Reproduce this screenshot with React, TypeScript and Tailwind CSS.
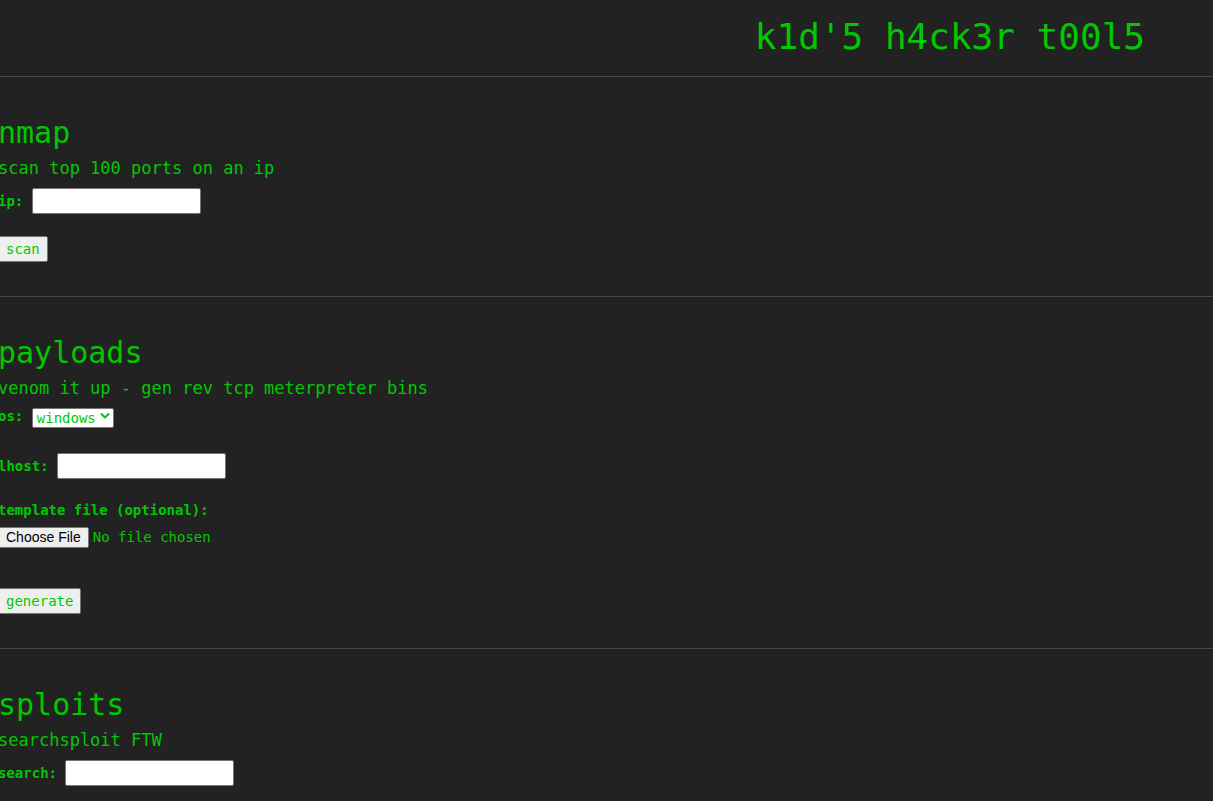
import React from "react";

const mono = "font-['DejaVu_Sans_Mono',monospace]";

function Row({ label, children, className = "" }: { label: string; children: React.ReactNode; className?: string }) {
  return (
    <div className={`flex items-center ${className}`}>
      <label className="text-[14px] font-bold leading-[17px]">{label}</label>
      {children}
    </div>
  );
}

function TextInput({ w }: { w: string }) {
  return (
    <input
      type="text"
      className={`${w} h-[26px] bg-white border border-[#767676] rounded-[2px] px-[2px] text-[14px] text-black outline-none`}
    />
  );
}

function Btn({ children }: { children: React.ReactNode }) {
  return (
    <button className="h-[26px] self-start px-[7px] bg-[#efefef] border border-[#767676] rounded-[2px] text-[14px] leading-none text-[#00c800]">
      {children}
    </button>
  );
}

function Heading({ children }: { children: React.ReactNode }) {
  return <h2 className="text-[30px] leading-[36px] font-normal">{children}</h2>;
}

function Desc({ children }: { children: React.ReactNode }) {
  return <p className="mt-[7px] text-[17px] leading-[20px]">{children}</p>;
}

export default function App() {
  return (
    <div className={`min-h-screen bg-[#222222] text-[#00c800] ${mono} overflow-hidden`}>
      <header className="h-[77px] border-b border-[#474747] pt-[15px] pr-[68px] flex justify-end">
        <h1 className="text-[36px] leading-[43px] font-normal">k1d'5 h4ck3r t00l5</h1>
      </header>

      <section className="border-b border-[#474747] pt-[38px] pb-[34px] -ml-[2px] flex flex-col">
        <Heading>nmap</Heading>
        <Desc>scan top 100 ports on an ip</Desc>
        <Row label="ip:" className="mt-[10px] h-[26px] gap-[8.5px]">
          <TextInput w="w-[169px]" />
        </Row>
        <div className="mt-[22px]">
          <Btn>scan</Btn>
        </div>
      </section>

      <section className="border-b border-[#474747] pt-[38px] pb-[34px] -ml-[2px] flex flex-col">
        <Heading>payloads</Heading>
        <Desc>venom it up - gen rev tcp meterpreter bins</Desc>
        <Row label="os:" className="mt-[8px] h-[20px] gap-[8.5px]">
          <div className="relative w-[82px] h-[20px]">
            <select
              defaultValue="windows"
              className="appearance-none w-full h-full bg-white border border-[#767676] rounded-[2px] pl-[4px] text-[14px] leading-[18px] text-[#00c800] outline-none"
            >
              <option value="windows">windows</option>
              <option value="linux">linux</option>
              <option value="osx">osx</option>
            </select>
            <svg
              className="pointer-events-none absolute right-[4px] top-[6px]"
              width="10"
              height="8"
              viewBox="0 0 10 8"
              fill="none"
            >
              <path d="M1.5 2 L5 5.5 L8.5 2" stroke="#00c800" strokeWidth="2" strokeLinecap="round" strokeLinejoin="round" />
            </svg>
          </div>
        </Row>
        <Row label="lhost:" className="mt-[27px] h-[26px] gap-[8.5px]">
          <TextInput w="w-[169px]" />
        </Row>
        <label className="mt-[23px] text-[14px] font-bold leading-[17px]">template file (optional):</label>
        <div className="mt-[8px] flex items-center gap-[4px] h-[21px]">
          <label className="h-[21px] flex items-center px-[7px] bg-[#efefef] border border-[#767676] rounded-[2px] text-[14px] text-black font-['Liberation_Sans',Arial,sans-serif] cursor-default">
            Choose File
            <input type="file" className="hidden" />
          </label>
          <span className="text-[14px]">No file chosen</span>
        </div>
        <div className="mt-[40px]">
          <Btn>generate</Btn>
        </div>
      </section>

      <section className="pt-[38px] pb-[34px] -ml-[2px] flex flex-col">
        <Heading>sploits</Heading>
        <Desc>searchsploit FTW</Desc>
        <Row label="search:" className="mt-[10px] h-[26px] gap-[8px]">
          <TextInput w="w-[169px]" />
        </Row>
      </section>
    </div>
  );
}
